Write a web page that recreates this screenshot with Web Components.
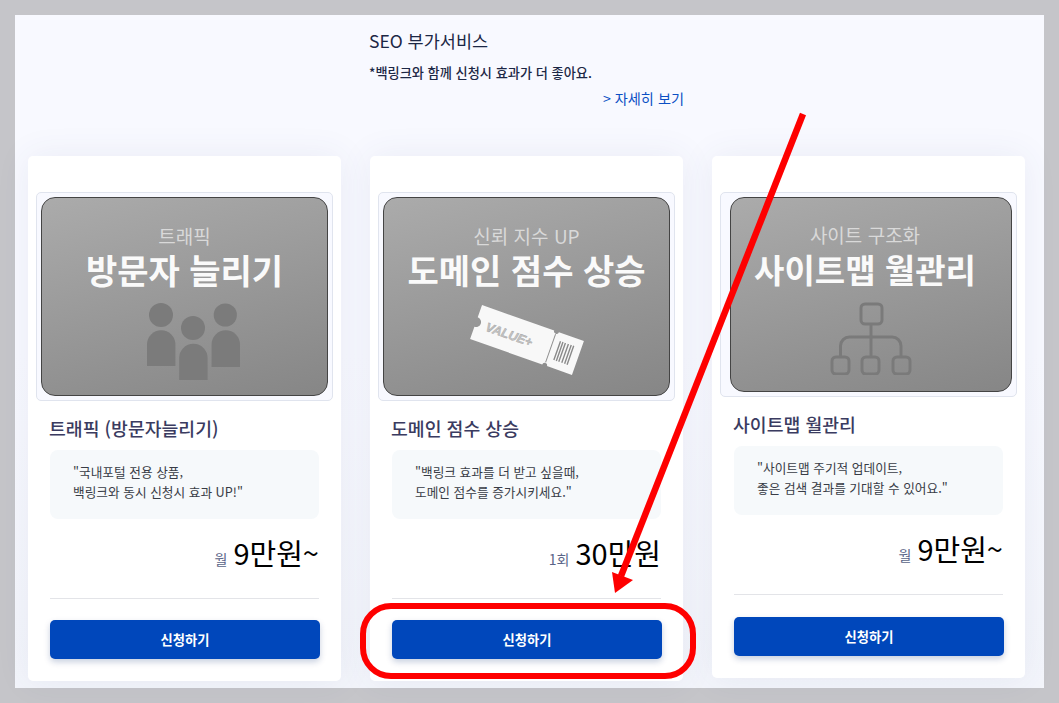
<!DOCTYPE html>
<html lang="ko">
<head>
<meta charset="utf-8">
<title>SEO 부가서비스</title>
<style>
  html, body { margin: 0; height: 100%; }
  body {
    background: #c5c5c9;
    font-family: "Noto Sans CJK KR", "Noto Sans", sans-serif;
  }
</style>
</head>
<body>
<seo-panel>
  <seo-header slot="header"></seo-header>

  <product-card name="트래픽 (방문자늘리기)" unit="월" amount="9만원~">
    <promo-image kicker="트래픽" headline="방문자 늘리기">
      <svg width="94" height="78" viewBox="0 0 94 78" fill="#7b7b7b" style="margin-left:19px">
        <circle cx="14" cy="12" r="12"/>
        <path d="M0 63V41.5a14.2 14.2 0 0 1 28.4 0V63z"/>
        <circle cx="46" cy="25" r="12"/>
        <path d="M32.2 77V55a14.2 14.2 0 0 1 28.4 0V77z"/>
        <circle cx="78.3" cy="12" r="11.6"/>
        <path d="M64.6 64V41.5a14.2 14.2 0 0 1 28.4 0V64z"/>
      </svg>
    </promo-image>
    <span slot="desc">"국내포털 전용 상품,<br>백링크와 동시 신청시 효과 UP!"</span>
  </product-card>

  <product-card name="도메인 점수 상승" unit="1회" amount="30만원">
    <promo-image kicker="신뢰 지수 UP" headline="도메인 점수 상승">
      <svg width="124" height="80" viewBox="0 0 124 80" style="margin-top:-3px">
        <g transform="translate(62 40) rotate(19.4) translate(-54 -18)">
          <path fill="#f8f8f8" d="M0 0H76.5a2.5 2.5 0 0 0 5 0H108V36H81.5a2.5 2.5 0 0 0-5 0H0V23a5 5 0 0 0 0-10z"/>
          <path stroke="#8f8f8f" stroke-width="1" d="M79 3V33"/>
          <text x="11" y="23" font-family="Liberation Sans, sans-serif" font-size="12.5" font-weight="700" font-style="italic" fill="#c4c4c4" stroke="#9a9a9a" stroke-width=".35">VALUE+</text>
          <path stroke="#8a8a8a" stroke-width="1.4" d="M86 8V28M88.6 8V28M91.2 8V28M94.4 8V28M97.4 8V28M100 8V28"/>
        </g>
      </svg>
    </promo-image>
    <span slot="desc">"백링크 효과를 더 받고 싶을때,<br>도메인 점수를 증가시키세요."</span>
  </product-card>

  <product-card compact name="사이트맵 월관리" unit="월" amount="9만원~">
    <promo-image kicker="사이트 구조화" headline="사이트맵 월관리" style="--text-shift:-6px;--text-top:25px;--headline-size:33px">
      <svg width="82" height="73" viewBox="0 0 82 73" fill="none" stroke="#7a7a7a" stroke-width="3">
        <rect x="31" y="2" width="21" height="20" rx="4"/>
        <rect x="2" y="55" width="17" height="17" rx="4"/>
        <rect x="32" y="55" width="17" height="17" rx="4"/>
        <rect x="63" y="55" width="17" height="17" rx="4"/>
        <path d="M41 22V55M10.5 55V44a9 9 0 0 1 9-9H62a9 9 0 0 1 9 9V55"/>
      </svg>
    </promo-image>
    <span slot="desc">"사이트맵 주기적 업데이트,<br>좋은 검색 결과를 기대할 수 있어요."</span>
  </product-card>
</seo-panel>

<script>
// Outer sheet: grey surround, pale panel, three card columns, drawn markup on top.
class SeoPanel extends HTMLElement {
  constructor() {
    super()
    this.attachShadow({ mode: "open" }).innerHTML = `
      <style>
        :host {
          display: block;
          box-sizing: border-box;
          position: relative;
          height: 703px;
          padding: 15px;
          overflow: hidden;
        }
        .sheet {
          box-sizing: border-box;
          height: 673px;
          padding: 0 19px 0 13px;
          background: linear-gradient(#f8f9ff 0, #f8f9ff 50%, #f3f5fb 100%);
          display: grid;
          grid-template-columns: repeat(3, 313px);
          grid-template-rows: 141px auto;
          column-gap: 29px;
          align-items: start;
        }
        .head { grid-column: 2; grid-row: 1; }
        ::slotted(product-card) { grid-row: 2; }
        .overlay { position: absolute; left: 0; top: 0; pointer-events: none; }
      </style>
      <div class="sheet">
        <div class="head"><slot name="header"></slot></div>
        <slot></slot>
      </div>
      <svg class="overlay" width="1059" height="703" viewBox="0 0 1059 703" fill="none">
        <path d="M803 114L621 576" stroke="#fe0000" stroke-width="6.5"/>
        <path d="M615 593L612 572L633 580z" fill="#fe0000"/>
        <rect x="363" y="606" width="330" height="70" rx="28" stroke="#fe0000" stroke-width="6"/>
      </svg>
    `
  }
}

class SeoHeader extends HTMLElement {
  constructor() {
    super()
    this.attachShadow({ mode: "open" }).innerHTML = `
      <style>
        :host { display: block; color: #1c2745; }
        h2 { margin: 0 0 0 -1px; padding-top: 13px; font-size: 17.5px; font-weight: 400; line-height: 26px; }
        p { margin: 0 0 0 -1px; padding-top: 9px; font-size: 13.2px; font-weight: 500; line-height: 20px; }
        a { display: block; margin-right: -1px; padding-top: 5px; text-align: right; font-size: 14.2px; line-height: 20px; color: #0b4fc4; text-decoration: none; }
      </style>
      <h2>SEO 부가서비스</h2>
      <p>*백링크와 함께 신청시 효과가 더 좋아요.</p>
      <a href="#">&gt; 자세히 보기</a>
    `
  }
}

// Grey banner with its two lines of copy; the icon comes through the slot.
class PromoImage extends HTMLElement {
  constructor() {
    super()
    this.attachShadow({ mode: "open" })
  }

  connectedCallback() {
    this.shadowRoot.innerHTML = `
      <style>
        :host {
          display: flex;
          flex-direction: column;
          align-items: center;
          box-sizing: border-box;
          height: 100%;
          padding-top: var(--text-top, 26px);
          border: 1px solid #444;
          border-radius: 14px;
          background: linear-gradient(165deg, #ababab 0%, #868686 100%);
          overflow: hidden;
        }
        .kicker { font-size: 19px; line-height: 24px; color: #d9d9d9; transform: translateX(var(--text-shift, 0)); }
        .headline { font-size: var(--headline-size, 34px); font-weight: 700; line-height: 44px; color: #fafafa; white-space: nowrap; transform: translateX(var(--text-shift, 0)); }
        .icon { padding-top: 11px; line-height: 0; }
      </style>
      <div class="kicker">${this.getAttribute("kicker")}</div>
      <div class="headline">${this.getAttribute("headline")}</div>
      <div class="icon"><slot></slot></div>
    `
  }
}

class ProductCard extends HTMLElement {
  constructor() {
    super()
    this.attachShadow({ mode: "open" })
  }

  connectedCallback() {
    const compact = this.hasAttribute("compact")
    this.shadowRoot.innerHTML = `
      <style>
        :host {
          display: block;
          box-sizing: border-box;
          padding: 36px 8px 22px;
          background: #fff;
          border-radius: 5px;
          box-shadow: 0 0 34px rgba(70, 80, 130, .08);
        }
        .frame {
          box-sizing: border-box;
          height: ${compact ? 205 : 209}px;
          padding: ${compact ? "4px 4px 4px 9px" : "4px"};
          border: 1px solid #e0e4ee;
          border-radius: 5px;
          background: #f8f9ff;
        }
        .body { padding: 0 14px; }
        h3 { margin: 0 0 0 -1px; padding-top: 15px; font-size: 18.3px; font-weight: 500; line-height: 24px; color: #3a3b60; }
        .desc {
          box-sizing: border-box;
          width: 269px;
          height: 69px;
          margin-top: 10px;
          padding: 12px 23px;
          border-radius: 8px;
          background: #f6f9fb;
          font-size: 12.7px;
          line-height: 20px;
          color: #383c46;
        }
        .price {
          display: flex;
          justify-content: flex-end;
          align-items: baseline;
          gap: 6px;
          width: 269px;
          height: 80px;
          box-sizing: border-box;
          padding-top: 13px;
          border-bottom: 1px solid #e3e4e8;
          color: #000;
          font-size: 29px;
          line-height: 41px;
        }
        .unit { font-size: 14px; color: #5a6488; }
        button {
          display: block;
          width: 270px;
          height: 39px;
          margin-top: ${compact ? 22 : 21}px;
          padding: 0;
          border: 0;
          border-radius: 5px;
          background: #0047bb;
          box-shadow: 0 3px 6px rgba(0, 40, 110, .22);
          color: #fff;
          font: 700 13.3px "Noto Sans CJK KR", sans-serif;
        }
      </style>
      <div class="frame"><slot></slot></div>
      <div class="body">
        <h3>${this.getAttribute("name")}</h3>
        <div class="desc"><slot name="desc"></slot></div>
        <div class="price">
          <span class="unit">${this.getAttribute("unit")}</span>
          <span>${this.getAttribute("amount")}</span>
        </div>
        <button>신청하기</button>
      </div>
    `
  }
}

customElements.define("seo-panel", SeoPanel)
customElements.define("seo-header", SeoHeader)
customElements.define("promo-image", PromoImage)
customElements.define("product-card", ProductCard)
</script>
</body>
</html>
